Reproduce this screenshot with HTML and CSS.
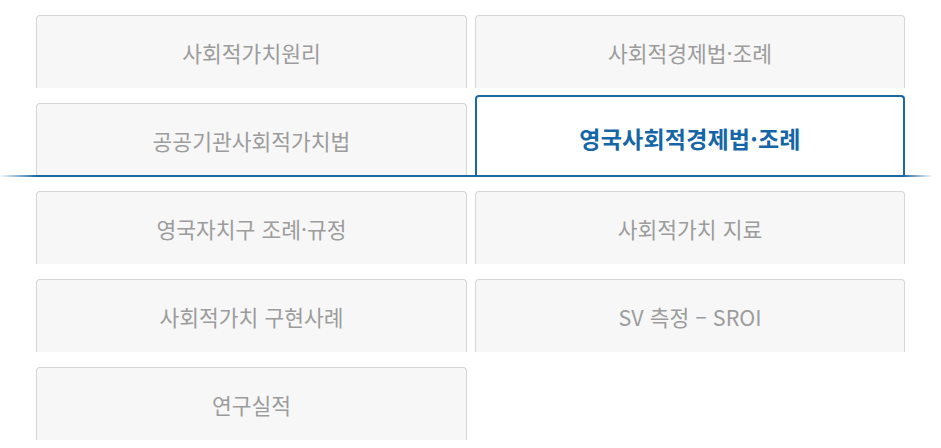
FILE: index.html
```html
<!DOCTYPE html>
<html lang="ko">
<head>
<meta charset="utf-8">
<title>사회적가치</title>
<link rel="stylesheet" href="styles.css">
</head>
<body>
<nav class="tabs">
  <a class="tab" href="#">사회적가치원리</a>
  <a class="tab" href="#">사회적경제법·조례</a>
  <a class="tab" href="#">공공기관사회적가치법</a>
  <a class="tab tab--active" href="#">영국사회적경제법·조례</a>
  <a class="tab" href="#">영국자치구 조례·규정</a>
  <a class="tab" href="#">사회적가치 지료</a>
  <a class="tab" href="#">사회적가치 구현사례</a>
  <a class="tab" href="#">SV 측정 – SROI</a>
  <a class="tab" href="#">연구실적</a>
</nav>
</body>
</html>
```
FILE: styles.css
```css
html, body {
  margin: 0;
  padding: 0;
  background: #ffffff;
}

.tabs {
  display: grid;
  grid-template-columns: 431px 430px;
  grid-auto-rows: 73px;
  column-gap: 8px;
  row-gap: 15px;
  padding: 15px 36px 0 36px;
  font-family: "Noto Sans CJK KR", "Noto Sans", sans-serif;
}

.tab {
  display: flex;
  align-items: center;
  justify-content: center;
  box-sizing: border-box;
  background: #f7f7f7;
  border: 1px solid #d6d6d6;
  border-bottom: none;
  border-radius: 4px 4px 0 0;
  color: #9c9c9c;
  font-size: 21.5px;
  letter-spacing: 0;
  text-decoration: none;
  padding-top: 1px;
}

.tab--active {
  position: relative;
  margin-top: -8px;
  height: 81px;
  background: #ffffff;
  border: 2px solid #1a68a6;
  border-bottom: none;
  color: #1566a8;
  font-weight: 700;
  font-size: 23px;
  letter-spacing: 0.2px;
  padding-top: 2px;
  z-index: 1;
}

.tab--active::after {
  content: "";
  position: absolute;
  left: -478px;
  right: -38px;
  bottom: -1px;
  height: 2px;
  background: linear-gradient(to right,
    rgba(26, 104, 166, 0) 0,
    #1a68a6 38px,
    #1a68a6 calc(100% - 38px),
    rgba(26, 104, 166, 0) calc(100% - 8px));
}
```
